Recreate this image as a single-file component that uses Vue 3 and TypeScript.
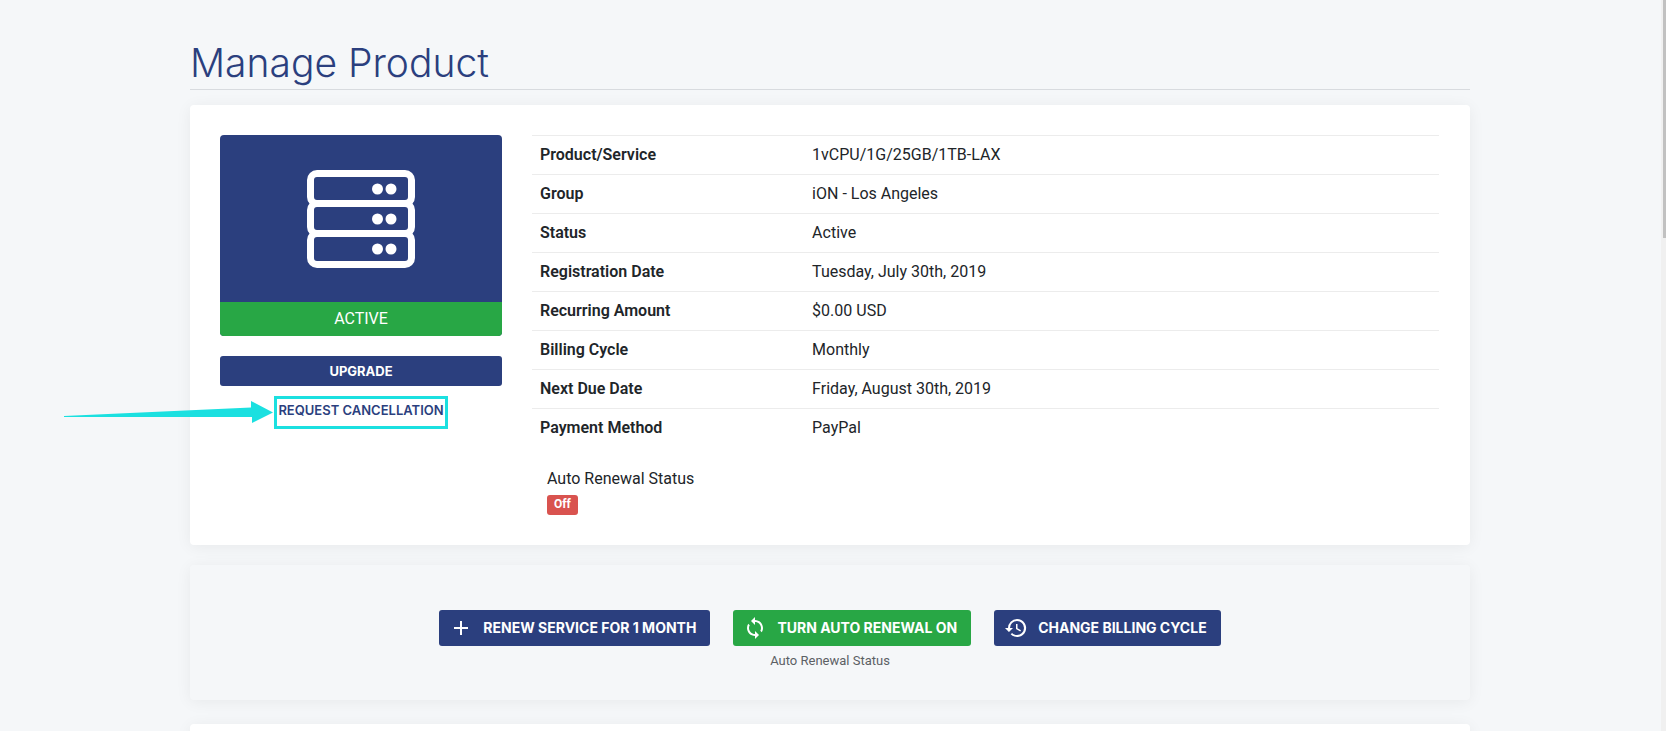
<script setup lang="ts">
interface Detail {
  label: string
  value: string
}

interface Action {
  label: string
  icon: string
  tone: 'primary' | 'success'
}

const details: Detail[] = [
  { label: 'Product/Service', value: '1vCPU/1G/25GB/1TB-LAX' },
  { label: 'Group', value: 'iON - Los Angeles' },
  { label: 'Status', value: 'Active' },
  { label: 'Registration Date', value: 'Tuesday, July 30th, 2019' },
  { label: 'Recurring Amount', value: '$0.00 USD' },
  { label: 'Billing Cycle', value: 'Monthly' },
  { label: 'Next Due Date', value: 'Friday, August 30th, 2019' },
  { label: 'Payment Method', value: 'PayPal' },
]

const actions: Action[] = [
  {
    label: 'Renew service for 1 month',
    icon: 'M19 13h-6v6h-2v-6H5v-2h6V5h2v6h6v2z',
    tone: 'primary',
  },
  {
    label: 'Turn auto renewal on',
    icon: 'M12 4V1L8 5l4 4V6c3.31 0 6 2.69 6 6 0 1.01-.25 1.97-.7 2.8l1.46 1.46C19.54 15.03 20 13.57 20 12c0-4.42-3.58-8-8-8zm0 14c-3.31 0-6-2.69-6-6 0-1.01.25-1.97.7-2.8L5.24 7.74C4.46 8.97 4 10.43 4 12c0 4.42 3.58 8 8 8v3l4-4-4-4v3z',
    tone: 'success',
  },
  {
    label: 'Change billing cycle',
    icon: 'M13 3a9 9 0 0 0-9 9H1l3.9 3.9.1.1L9 12H6a7 7 0 1 1 7 7c-1.900 0-3.700-.8-4.900-2.100l-1.400 1.400A9 9 0 1 0 13 3zm-1 5v5l4.300 2.500.7-1.200-3.500-2.100V8H12z',
    tone: 'primary',
  },
]
</script>

<template>
  <div class="page">
    <main class="content">
      <h1 class="title">Manage Product</h1>

      <section class="card product">
        <aside class="side">
          <div class="status-tile">
            <div class="tile-icon">
              <svg width="108" height="98" viewBox="0 0 108 98" fill="none" aria-hidden="true">
                <g stroke="#fff" stroke-width="7">
                  <rect x="3.500" y="3.500" width="101" height="30" rx="6.500" />
                  <rect x="3.500" y="33.500" width="101" height="30" rx="6.500" />
                  <rect x="3.500" y="63.500" width="101" height="31" rx="6.500" />
                </g>
                <g fill="#fff">
                  <circle cx="70.500" cy="19" r="5.500" />
                  <circle cx="84" cy="19" r="5.500" />
                  <circle cx="70.500" cy="49" r="5.500" />
                  <circle cx="84" cy="49" r="5.500" />
                  <circle cx="70.500" cy="79" r="5.500" />
                  <circle cx="84" cy="79" r="5.500" />
                </g>
              </svg>
            </div>
            <div class="tile-label">ACTIVE</div>
          </div>
          <button type="button" class="upgrade">UPGRADE</button>
          <div class="highlight">
            <svg class="arrow" width="210" height="24" viewBox="0 0 210 24" aria-hidden="true">
              <path d="M0 16L187 7.500V1L209 12.500L188 23V17L0 17Z" fill="#1be0e0" />
            </svg>
            <a href="#" class="cancel">REQUEST CANCELLATION</a>
          </div>
        </aside>

        <div class="info">
          <table class="details">
            <tbody>
              <tr v-for="row in details" :key="row.label">
                <th scope="row">{{ row.label }}</th>
                <td>{{ row.value }}</td>
              </tr>
            </tbody>
          </table>
          <div class="renewal">
            <div>Auto Renewal Status</div>
            <span class="badge">Off</span>
          </div>
        </div>
      </section>

      <section class="card actions">
        <div class="buttons">
          <button
            v-for="action in actions"
            :key="action.label"
            type="button"
            class="btn"
            :class="action.tone"
          >
            <svg width="24" height="24" viewBox="0 0 24 24" fill="currentColor" aria-hidden="true">
              <path :d="action.icon" />
            </svg>
            <span>{{ action.label }}</span>
          </button>
        </div>
        <small class="note">Auto Renewal Status</small>
      </section>

      <section class="card next"></section>
    </main>
    <div class="scrollbar"><div class="thumb"></div></div>
  </div>
</template>

<style>
body {
  margin: 0;
  background: #f5f7f9;
}
</style>

<style scoped>
.page {
  box-sizing: border-box;
  position: relative;
  height: 100vh;
  overflow: hidden;
  padding: 39px 24px 0 18px;
  background: #f5f7f9;
  color: #212529;
  font: 400 16px/24px Roboto, sans-serif;
}

.content {
  max-width: 1280px;
  margin: 0 auto;
}

.title {
  margin: 0 0 15px;
  padding-bottom: 2px;
  border-bottom: 1px solid #d8dbdf;
  color: #2b3f7e;
  font: 300 39px/48px Inter, sans-serif;
}

.card {
  box-sizing: border-box;
  border-radius: 4px;
  box-shadow: 0 2px 16px rgba(0, 0, 0, 0.06);
}

.product {
  display: grid;
  grid-template-columns: 282px 1fr;
  gap: 30px;
  padding: 30px 31px 30px 30px;
  background: #fff;
}

.side {
  display: flex;
  flex-direction: column;
  align-items: center;
}

.status-tile {
  width: 100%;
  border-radius: 4px;
  overflow: hidden;
  background: #2b3f7e;
  color: #fff;
  text-align: center;
}

.tile-icon {
  display: flex;
  align-items: center;
  justify-content: center;
  height: 167px;
}

.tile-label {
  background: #28a745;
  line-height: 34px;
}

.upgrade {
  width: 100%;
  height: 30px;
  margin: 20px 0 10px;
  padding: 0;
  border: 0;
  border-radius: 3px;
  background: #2b3f7e;
  color: #fff;
  font: 700 13px/18px Inter, sans-serif;
}

.highlight {
  position: relative;
  box-sizing: border-box;
  width: 174px;
  height: 33px;
  border: 3px solid #1be0e0;
}

.arrow {
  position: absolute;
  top: 1px;
  right: calc(100% + 3px);
}

.cancel {
  display: flex;
  justify-content: center;
  color: #2b3f7e;
  font: 600 13px/22px Inter, sans-serif;
  text-decoration: none;
  white-space: nowrap;
}

.details {
  width: 100%;
  table-layout: fixed;
  border-collapse: collapse;
}

.details th,
.details td {
  box-sizing: border-box;
  height: 39px;
  padding: 8px;
  border-top: 1px solid #ececec;
  line-height: 22px;
  text-align: left;
}

.details th {
  width: 30%;
  font-weight: 600;
}

.renewal {
  display: flex;
  flex-direction: column;
  align-items: flex-start;
  gap: 4px;
  padding: 19px 15px 0;
}

.badge {
  height: 20px;
  padding: 0 7px;
  border-radius: 3px;
  background: #d9534f;
  color: #fff;
  font-size: 12px;
  font-weight: 700;
  line-height: 18px;
}

.actions {
  display: flex;
  flex-direction: column;
  align-items: center;
  gap: 5px;
  min-height: 135px;
  margin-top: 20px;
  padding: 45px 30px 20px;
}

.buttons {
  display: flex;
  flex-wrap: wrap;
  justify-content: center;
  gap: 23px;
}

.btn {
  display: flex;
  align-items: center;
  gap: 10px;
  height: 36px;
  padding: 0 14px 0 10px;
  border: 0;
  border-radius: 3px;
  color: #fff;
  font: 700 14px/20px Inter, sans-serif;
  text-transform: uppercase;
  white-space: nowrap;
}

.primary {
  background: #2b3f7e;
}

.success {
  background: #28a745;
}

.note {
  color: #5c6065;
  font-size: 13px;
  line-height: 20px;
}

.next {
  height: 200px;
  margin-top: 24px;
  background: #fff;
}

.scrollbar {
  position: absolute;
  top: 0;
  right: 0;
  bottom: 0;
  width: 5px;
  background: #f0f0f0;
}

.thumb {
  width: 3px;
  height: 32.5%;
  margin-left: auto;
  background: #c1c1c1;
}
</style>
